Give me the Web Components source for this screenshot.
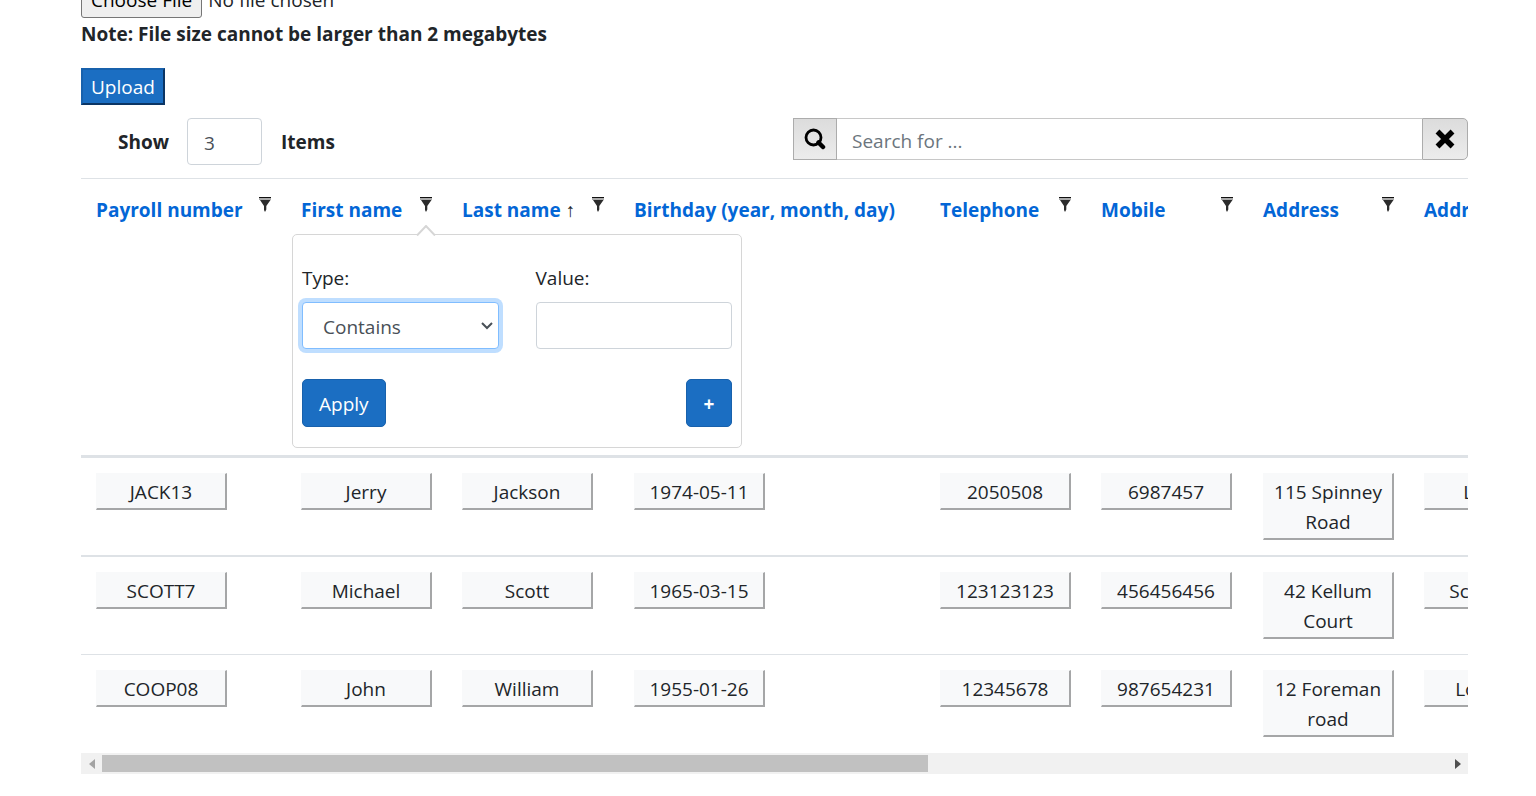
<!DOCTYPE html>
<html lang="en">
<head>
<meta charset="utf-8">
<title>Employees</title>
<style>
  body {
    margin: 0;
    background: #fff;
    color: #212529;
    font: 19px/30px "Open Sans", "Noto Sans", sans-serif;
    overflow: hidden;
  }
</style>
</head>
<body>
<employee-page></employee-page>

<script>
const BASE = `
  *, *::before, *::after { box-sizing: border-box; }
  button, input, select { font: inherit; margin: 0; }
`;

function define(name, markup, setup) {
  const template = document.createElement('template');
  template.innerHTML = markup.replace('<style>', '<style>' + BASE);
  customElements.define(name, class extends HTMLElement {
    constructor() {
      super();
      this.attachShadow({ mode: 'open' }).append(template.content.cloneNode(true));
      if (setup) setup(this, this.shadowRoot);
    }
  });
}

define('file-upload', `
  <style>
    :host { display: block; }
    input { display: block; width: 100%; height: 37px; color: #212529; }
    input::file-selector-button {
      font: inherit; height: 36px; padding: 0 9px; margin: 0 6px 0 0;
      border: 1px solid #767676; border-radius: 3px; background: #efefef; color: #000;
    }
    label { display: block; font-weight: 700; }
    button {
      display: block; height: 37px; margin-top: 19px; padding: 2px 8px 0; line-height: 31px;
      color: #fff; background: #1b6ec2; border: 2px solid;
      border-color: #1861ac #0b3564 #0b3564 #1861ac;
    }
  </style>
  <input type="file" id="file">
  <label for="file"><slot></slot></label>
  <button type="button">Upload</button>
`);

define('page-size', `
  <style>
    :host { display: flex; align-items: center; font-weight: 700; }
    input {
      width: 75px; height: 47px; margin: 0 19px 0 18px; padding: 2px 16px 0;
      border: 1px solid #ced4da; border-radius: 4px; color: #495057; font-weight: 400;
    }
  </style>
  <label for="count">Show</label>
  <input id="count" type="text" value="3">
  <span>Items</span>
`);

define('search-box', `
  <style>
    :host { display: flex; height: 42px; }
    input {
      flex: 1; min-width: 0; padding: 3px 15px 0; border: 1px solid #c8c8c8;
      border-width: 1px 0; outline: 0; color: #495057;
    }
    input::placeholder { color: #6c757d; opacity: 1; }
    button {
      display: grid; place-items: center; width: 44px; padding: 0;
      border: 1px solid #acacac; background: linear-gradient(#dcdcdc, #ececec);
    }
    button:first-child { border-radius: 5px 0 0 5px; }
    button:last-child { width: 46px; border-radius: 0 5px 5px 0; }
  </style>
  <button type="button" aria-label="Search">
    <svg width="22" height="22" viewBox="0 0 22 22" fill="none" stroke="#000">
      <circle cx="9.500" cy="9.500" r="7.500" stroke-width="2.800"/>
      <path d="M14.500 14.500L19 19" stroke-width="4.500" stroke-linecap="round"/>
    </svg>
  </button>
  <input type="text" placeholder="Search for ..." aria-label="Search for">
  <button type="button" aria-label="Clear">
    <svg width="20" height="20" viewBox="0 0 20 20" fill="none" stroke="#000" stroke-width="5.500">
      <path d="M2.500 2.500L17.500 17.500M17.500 2.500L2.500 17.500"/>
    </svg>
  </button>
`);

define('filter-button', `
  <style>
    :host { display: block; width: 12px; }
    button { display: block; width: 12px; height: 15px; padding: 0; border: 0; background: none; }
    svg { display: block; }
  </style>
  <button type="button" aria-label="Filter">
    <svg width="12" height="15" viewBox="0 0 12 15">
      <path fill="#aaa" d="M0 1h12v2H0z"/>
      <path fill="#111" d="M0 0h12v1H0z"/>
      <path fill="#2c2c2c" d="M1 3h10.500L7.300 9v3.500L6 15l-1-2V9z"/>
    </svg>
  </button>
`);

define('filter-popup', `
  <style>
    :host {
      display: block; width: 450px; padding: 28px 9px 20px;
      background: #fff; border: 1px solid #d6d6d6; border-radius: 5px; font-weight: 400;
    }
    .arrow { position: absolute; top: -10px; left: 123px; }
    .fields { display: grid; grid-template-columns: 1fr 1fr; gap: 9px 37px; }
    select, input {
      width: 100%; height: 47px; border: 1px solid #ced4da; border-radius: 4px;
      background: #fff; color: #495057; outline: 0;
    }
    .select { position: relative; }
    select {
      display: block; appearance: none; padding: 2px 32px 0 20px;
      border-color: #80bdff; box-shadow: 0 0 0 4px #bfdeff;
    }
    .select svg { position: absolute; right: 5px; top: 19px; pointer-events: none; }
    .actions { display: flex; justify-content: space-between; margin-top: 30px; }
    button {
      height: 48px; padding: 2px 16px 0; color: #fff; background: #1b6ec2;
      border: 1px solid #1861ac; border-radius: 5px;
    }
    .add { width: 46px; padding: 2px 0 0; font-weight: 700; }
  </style>
  <svg class="arrow" width="20" height="11" viewBox="0 0 20 11">
    <path d="M1 10.500L10 1L19 10.500" fill="#fff" stroke="#d6d6d6" stroke-width="2"/>
  </svg>
  <div class="fields">
    <label for="type">Type:</label>
    <label for="value">Value:</label>
    <div class="select">
      <select id="type"><option>Contains</option></select>
      <svg width="14" height="10" viewBox="0 0 14 10" fill="none" stroke="#495057" stroke-width="2">
        <path d="M2 2L7 7L12 2"/>
      </svg>
    </div>
    <input id="value" type="text">
  </div>
  <div class="actions">
    <button type="button">Apply</button>
    <button type="button" class="add">+</button>
  </div>
`);

define('scroll-track', `
  <style>
    :host { display: flex; align-items: center; height: 21px; background: #f1f1f1; }
    button { width: 21px; height: 21px; padding: 0; border: 0; background: none; display: grid; place-items: center; }
    .lane { flex: 1; height: 17px; }
    .thumb { width: 61.4%; height: 17px; background: #c1c1c1; }
  </style>
  <button type="button" aria-label="Scroll left">
    <svg width="6" height="10" viewBox="0 0 6 10"><path d="M6 0v10L0 5z" fill="#a3a3a3"/></svg>
  </button>
  <div class="lane"><div class="thumb"></div></div>
  <button type="button" aria-label="Scroll right">
    <svg width="6" height="10" viewBox="0 0 6 10"><path d="M0 0v10L6 5z" fill="#505050"/></svg>
  </button>
`);

const COLUMNS = [
  { title: 'Payroll number', width: 205, filter: true },
  { title: 'First name', width: 161, filter: true, open: true },
  { title: 'Last name', width: 172, filter: true, sorted: true },
  { title: 'Birthday (year, month, day)', width: 306 },
  { title: 'Telephone', width: 161, filter: true },
  { title: 'Mobile', width: 162, filter: true },
  { title: 'Address', width: 161, filter: true },
  { title: 'Address2', width: 161 },
];
const ROWS = [
  ['JACK13', 'Jerry', 'Jackson', '1974-05-11', '2050508', '6987457', '115 Spinney Road', 'Luton'],
  ['SCOTT7', 'Michael', 'Scott', '1965-03-15', '123123123', '456456456', '42 Kellum Court', 'Scranton'],
  ['COOP08', 'John', 'William', '1955-01-26', '12345678', '987654231', '12 Foreman road', 'London'],
];

define('employee-grid', `
  <style>
    :host { display: block; }
    .scroller { overflow: hidden; }
    table { table-layout: fixed; border-collapse: separate; border-spacing: 0; width: 1489px; }
    th { height: 280px; padding: 16px 15px 0; vertical-align: top; text-align: left;
         border-top: 1px solid #dee2e6; border-bottom: 3px solid #dee2e6; }
    .head { display: flex; justify-content: space-between; position: relative; white-space: nowrap; }
    a { color: #0366d6; text-decoration: none; }
    .sort { font-weight: 400; }
    filter-button { margin-top: 2px; }
    filter-popup { position: absolute; top: 39px; left: -9px; z-index: 1; }
    td { height: 98px; padding: 15px 15px 0; vertical-align: top; }
    tbody tr:first-child td { border-bottom: 2px solid #dee2e6; height: 99px; }
    tbody tr:nth-child(2) td { border-bottom: 1px solid #dee2e6; }
    td button {
      display: block; width: 131px; min-height: 37px; padding: 3px 6px 1px;
      color: #212529; background: #f8f9fa; border: solid;
      border-width: 1px 2px 2px 1px; border-color: #f8f9fa #a5a6a7 #a5a6a7 #f8f9fa;
    }
  </style>
  <div class="scroller">
    <table>
      <colgroup></colgroup>
      <thead><tr></tr></thead>
      <tbody></tbody>
    </table>
  </div>
  <scroll-track></scroll-track>
`, (host, root) => {
  root.querySelector('colgroup').innerHTML =
    COLUMNS.map(c => `<col style="width:${c.width}px">`).join('');
  root.querySelector('thead tr').innerHTML = COLUMNS.map(c => `
    <th scope="col"><div class="head">
      <span><a href="#">${c.title}</a>${c.sorted ? ' <span class="sort">↑</span>' : ''}</span>
      ${c.filter ? '<filter-button></filter-button>' : ''}
      ${c.open ? '<filter-popup></filter-popup>' : ''}
    </div></th>`).join('');
  root.querySelector('tbody').innerHTML = ROWS.map(r =>
    `<tr>${r.map(v => `<td><button type="button">${v}</button></td>`).join('')}</tr>`).join('');
});

define('employee-page', `
  <style>
    :host { display: block; margin-top: -18px; padding: 0 68px 0 81px; }
    .bar { display: flex; justify-content: space-between; align-items: flex-start;
           margin: 13px 0; padding-left: 37px; }
    search-box { width: 675px; }
  </style>
  <main>
    <file-upload>Note: File size cannot be larger than 2 megabytes</file-upload>
    <div class="bar">
      <page-size></page-size>
      <search-box></search-box>
    </div>
    <employee-grid></employee-grid>
  </main>
`);
</script>
</body>
</html>
